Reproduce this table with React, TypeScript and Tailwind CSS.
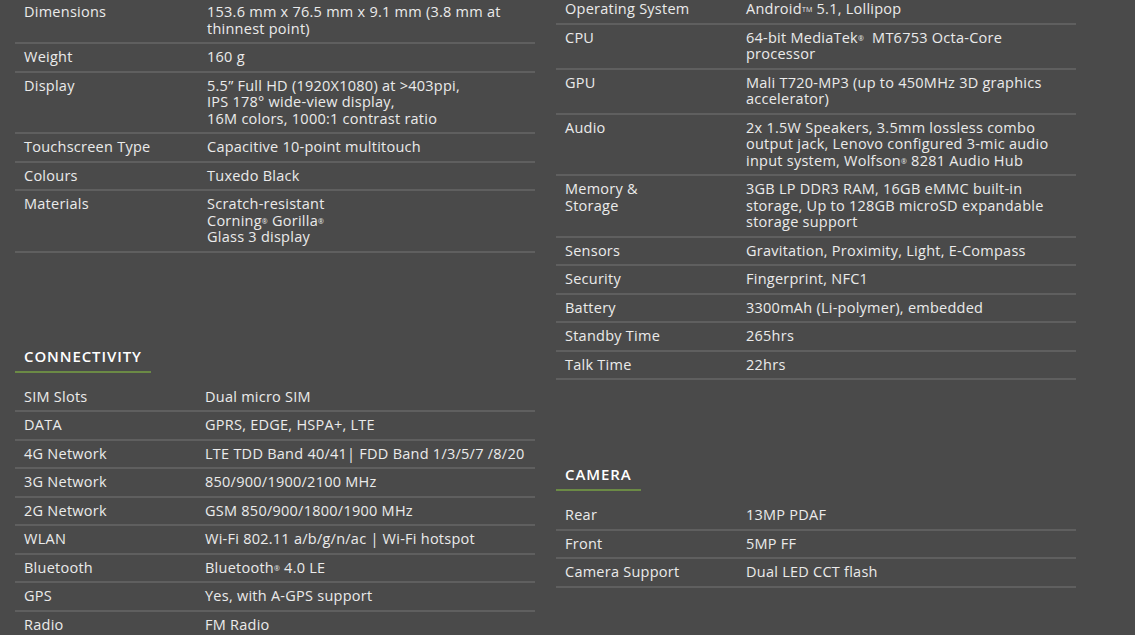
import type { ReactNode } from 'react';

type Row = [string, ReactNode[]];

const R = () => <sup className="relative top-[-2px] text-[7px] leading-none">®</sup>;
const TM = () => <sup className="relative top-[-2px] text-[7px] leading-none">TM</sup>;

const general: Row[] = [
  ['Dimensions', ['153.6 mm x 76.5 mm x 9.1 mm (3.8 mm at', 'thinnest point)']],
  ['Weight', ['160 g']],
  ['Display', ['5.5” Full HD (1920X1080) at >403ppi,', 'IPS 178° wide-view display,', '16M colors, 1000:1 contrast ratio']],
  ['Touchscreen Type', ['Capacitive 10-point multitouch']],
  ['Colours', ['Tuxedo Black']],
  ['Materials', ['Scratch-resistant', <>Corning<R /> Gorilla<R /></>, 'Glass 3 display']],
];

const connectivity: Row[] = [
  ['SIM Slots', ['Dual micro SIM']],
  ['DATA', ['GPRS, EDGE, HSPA+, LTE']],
  ['4G Network', ['LTE TDD Band 40/41| FDD Band 1/3/5/7 /8/20']],
  ['3G Network', ['850/900/1900/2100 MHz']],
  ['2G Network', ['GSM 850/900/1800/1900 MHz']],
  ['WLAN', ['Wi-Fi 802.11 a/b/g/n/ac | Wi-Fi hotspot']],
  ['Bluetooth', [<>Bluetooth<R /> 4.0 LE</>]],
  ['GPS', ['Yes, with A-GPS support']],
  ['Radio', ['FM Radio']],
];

const platform: Row[] = [
  ['Operating System', [<>Android<TM /> 5.1, Lollipop</>]],
  ['CPU', [<>64-bit MediaTek<R />  MT6753 Octa-Core</>, 'processor']],
  ['GPU', ['Mali T720-MP3 (up to 450MHz 3D graphics', 'accelerator)']],
  ['Audio', ['2x 1.5W Speakers, 3.5mm lossless combo', 'output jack, Lenovo configured 3-mic audio', <>input system, Wolfson<R /> 8281 Audio Hub</>]],
  ['Memory &\nStorage', ['3GB LP DDR3 RAM, 16GB eMMC built-in', 'storage, Up to 128GB microSD expandable', 'storage support']],
  ['Sensors', ['Gravitation, Proximity, Light, E-Compass']],
  ['Security', ['Fingerprint, NFC1']],
  ['Battery', ['3300mAh (Li-polymer), embedded']],
  ['Standby Time', ['265hrs']],
  ['Talk Time', ['22hrs']],
];

const camera: Row[] = [
  ['Rear', ['13MP PDAF']],
  ['Front', ['5MP FF']],
  ['Camera Support', ['Dual LED CCT flash']],
];

function SpecTable({ rows, labelWidth }: { rows: Row[]; labelWidth: string }) {
  return (
    <div className="flex flex-col">
      {rows.map(([label, value]) => (
        <div key={label} className="flex border-b-2 border-[#5f5f5f] py-[5px] leading-[16.5px]">
          <div className={`${labelWidth} shrink-0 whitespace-pre-line pl-[9px]`}>{label}</div>
          <div className="flex flex-col">
            {value.map((line, i) => (
              <span key={i} className="whitespace-pre">{line}</span>
            ))}
          </div>
        </div>
      ))}
    </div>
  );
}

function SectionTitle({ children }: { children: string }) {
  return (
    <div className="flex">
      <h3 className="border-b-2 border-[#6b8a45] px-[9px] pb-[5px] text-[15px] font-semibold uppercase leading-[20px] tracking-[0.9px] text-white">
        {children}
      </h3>
    </div>
  );
}

export default function App() {
  return (
    <div
      className="h-[635px] w-[1135px] overflow-hidden bg-[#4a4a4a] text-[14.5px] tracking-[0.25px] text-[#ebebeb]"
      style={{ fontFamily: '"Open Sans", Lato, sans-serif' }}
    >
      <div className="grid grid-cols-[520px_520px] gap-x-[21px] pl-[15px]">
        <div className="mt-[-1px] flex flex-col">
          <SpecTable rows={general} labelWidth="w-[192px]" />
          <div className="mt-[93px]">
            <SectionTitle>Connectivity</SectionTitle>
          </div>
          <div className="mt-[11px]">
            <SpecTable rows={connectivity} labelWidth="w-[190px]" />
          </div>
        </div>
        <div className="mt-[-4px] flex flex-col">
          <SpecTable rows={platform} labelWidth="w-[190px]" />
          <div className="mt-[84px]">
            <SectionTitle>Camera</SectionTitle>
          </div>
          <div className="mt-[11px]">
            <SpecTable rows={camera} labelWidth="w-[190px]" />
          </div>
        </div>
      </div>
    </div>
  );
}
